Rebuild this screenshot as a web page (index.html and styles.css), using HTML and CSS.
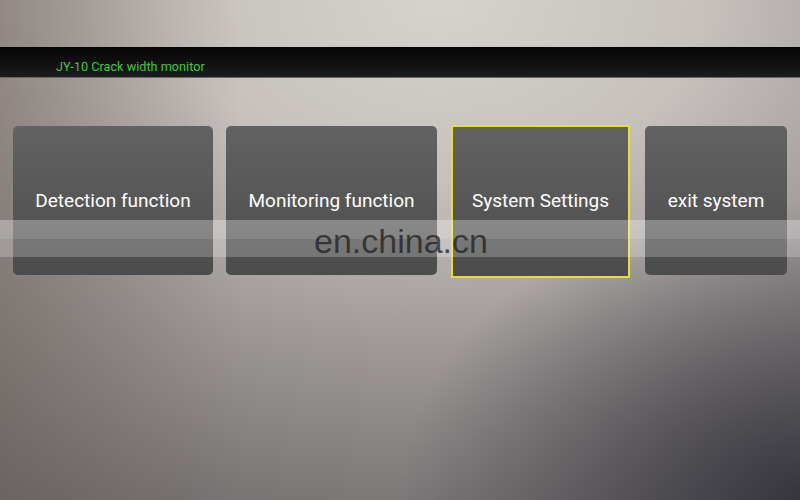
FILE: index.html
```html
<!DOCTYPE html>
<html lang="en">
<head>
  <meta charset="UTF-8" />
  <meta name="viewport" content="width=device-width, initial-scale=1.0" />
  <title>JY-10 Crack width monitor</title>
  <link rel="stylesheet" href="styles.css">
</head>
<body>
  <header class="titlebar">
    <h1>JY-10 Crack width monitor</h1>
  </header>
  <div class="menu">
    <div class="tile tile-detect">Detection function</div>
    <div class="tile tile-monitor">Monitoring function</div>
    <div class="tile tile-settings selected">System Settings</div>
    <div class="tile tile-exit">exit system</div>
  </div>
  <div class="watermark">
    <span>en.china.cn</span>
  </div>
</body>
</html>
```

FILE: styles.css
```css
html, body {
  height: 100%;
}
body {
  margin: 0;
  font-family: Roboto, "Liberation Sans", sans-serif;
  color: #fff;
  position: relative;
  overflow: hidden;
  background:
    radial-gradient(ellipse 50% 60% at 100% 100%, rgba(40, 40, 50, 0.8), rgba(40, 40, 50, 0) 100%),
    linear-gradient(to right, rgba(110, 95, 88, 0.4), rgba(110, 95, 88, 0) 30%),
    radial-gradient(ellipse 110% 120% at 55% 0%, #d6d2ce 0%, #c6c1bd 30%, #9e9997 58%, #7a7676 85%, #666264 100%);
}
.titlebar {
  margin-top: 47px;
  height: 31px;
  background: linear-gradient(to bottom, #050505, #121212 60%, #1c1c1c);
  border-bottom: 1px solid #6a6866;
  box-sizing: border-box;
  display: flex;
  align-items: center;
  padding: 0 0 0 56px;
}
.titlebar h1 {
  margin: 0;
  font-size: 12.7px;
  font-weight: normal;
  color: #3ec83e;
  padding-top: 9px;
}
.menu {
  display: flex;
  align-items: flex-start;
  padding: 48px 0 0 13px;
  gap: 13px;
}
.tile {
  height: 149px;
  border-radius: 5px;
  background: linear-gradient(to bottom, #626262, #4c4c4c);
  display: flex;
  align-items: center;
  justify-content: center;
  font-size: 19px;
  box-sizing: border-box;
}
.tile-detect { width: 200px; }
.tile-monitor { width: 211px; }
.tile-settings { width: 179px; }
.tile-exit { width: 142px; }
.tile.selected {
  border: 2px solid #e6e02a;
  border-radius: 0;
  height: 153px;
  margin-top: -1px;
  margin-left: 1px;
  margin-right: 2px;
  padding-bottom: 2px;
}
.watermark {
  position: absolute;
  left: 0;
  right: 0;
  top: 220px;
  height: 37px;
  background: linear-gradient(to bottom, rgba(255, 255, 255, 0.3) 0%, rgba(255, 255, 255, 0.3) 50%, rgba(255, 255, 255, 0.22) 52%, rgba(255, 255, 255, 0.22) 100%);
  display: flex;
  align-items: center;
  justify-content: center;
}
.watermark span {
  font-family: "Liberation Sans", Arial, sans-serif;
  font-size: 34px;
  color: rgba(35, 35, 35, 0.78);
  margin-left: 2px;
  margin-top: 5px;
}
```
